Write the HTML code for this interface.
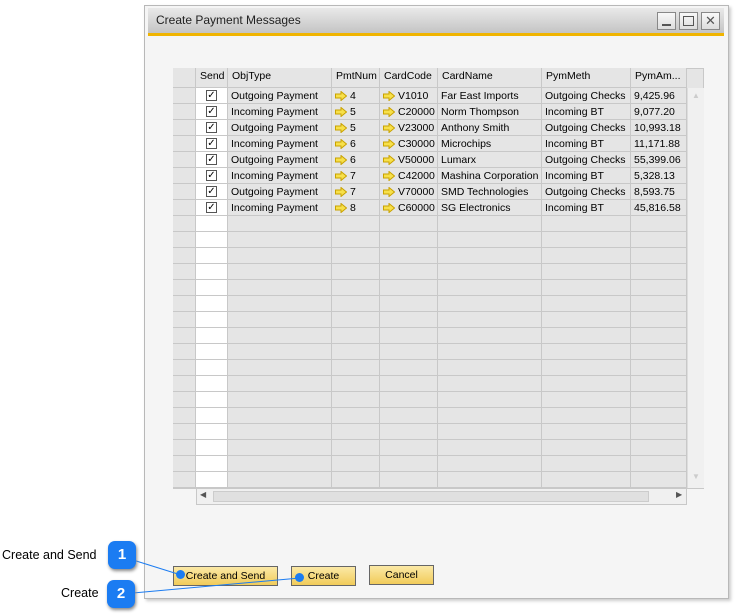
<!DOCTYPE html>
<html><head><meta charset="utf-8"><style>
*{margin:0;padding:0;box-sizing:border-box}
body{width:736px;height:616px;background:#fff;position:relative;overflow:hidden;font-family:"Liberation Sans","DejaVu Sans",sans-serif;font-size:10.5px;color:#000}
.a{position:absolute}
.win{left:144px;top:5px;width:585px;height:594px;border:1px solid #b8b8b8;background:#f5f5f5;box-shadow:2px 2px 3px #ccc}
.title{left:148px;top:8px;width:576px;height:25px;background:linear-gradient(#e9e9e9,#c4c4c4)}
.tbtn{top:12px;width:19px;height:18px;border:1px solid #888;background:linear-gradient(#f8f8f8,#ddd)}
.col{top:68px;height:420px;border-right:1px solid #c8c8c8;background:#e5e5e5}
.hd{top:68px;height:20px;line-height:17px;padding-left:4px;border-bottom:1px solid #c8c8c8;background:#e5e5e5;border-right:1px solid #c8c8c8}
.row{left:196px;width:491px;height:15px}
.c{position:absolute;top:0;height:16px;line-height:16px;padding-left:3px;white-space:nowrap}
.chk{position:absolute;left:10px;top:2px;width:11px;height:11px;border:1px solid #555;background:#fff;font-size:10px;line-height:9px;text-align:center}
.ar{display:inline-block;vertical-align:-2px;margin-right:3px}
.btn{top:566px;height:20px;border:1px solid #666;background:linear-gradient(#fbe9a6,#f1cb5a);text-align:center;line-height:18px;font-size:10.5px}
.badge{width:28px;height:28px;border-radius:7px;background:#1b7cf2;color:#fff;font-weight:bold;font-size:15px;text-align:center;line-height:28px;box-shadow:1px 2px 3px #888}
.dot{width:9px;height:9px;border-radius:50%;background:#1b7cf2}
</style></head><body>
<svg width="0" height="0" style="position:absolute"><defs><symbol id="ar" viewBox="0 0 12 10"><path d="M0.5 3H6V0.5L11.5 5L6 9.5V7H0.5Z" fill="#f7e04a" stroke="#c9a200" stroke-width="1"/></symbol></defs></svg>
<div class="a win"></div>
<div class="a title"></div>
<div class="a" style="left:156px;top:13px;font-size:12px;color:#222">Create Payment Messages</div>
<div class="a" style="left:148px;top:33px;width:576px;height:3px;background:#f0b400"></div>
<div class="a tbtn" style="left:657px"><div class="a" style="left:4px;top:11px;width:9px;height:2px;background:#555"></div></div>
<div class="a tbtn" style="left:679px"><div class="a" style="left:3px;top:3px;width:11px;height:10px;border:1px solid #555"></div></div>
<div class="a tbtn" style="left:701px;text-align:center;line-height:16px;font-size:13px;color:#555">✕</div>

<div class="a" style="left:173px;top:68px;width:531px;height:421px;border:1px solid #c8c8c8;background:#e5e5e5"></div>
<div class="a col" style="left:173px;width:23px"></div>
<div class="a col" style="left:196px;width:32px;background:#fff"></div>
<div class="a col" style="left:228px;width:104px"></div>
<div class="a col" style="left:332px;width:48px"></div>
<div class="a col" style="left:380px;width:58px"></div>
<div class="a col" style="left:438px;width:104px"></div>
<div class="a col" style="left:542px;width:89px"></div>
<div class="a col" style="left:631px;width:56px"></div>
<div class="a" style="left:173px;top:88px;width:514px;height:400px;background:repeating-linear-gradient(to bottom,transparent 0,transparent 15px,#c8c8c8 15px,#c8c8c8 16px)"></div>
<div class="a hd" style="left:173px;width:23px"></div>
<div class="a hd" style="left:196px;width:32px">Send</div>
<div class="a hd" style="left:228px;width:104px">ObjType</div>
<div class="a hd" style="left:332px;width:48px">PmtNum</div>
<div class="a hd" style="left:380px;width:58px">CardCode</div>
<div class="a hd" style="left:438px;width:104px">CardName</div>
<div class="a hd" style="left:542px;width:89px">PymMeth</div>
<div class="a hd" style="left:631px;width:56px">PymAm...</div>
<div class="a" style="left:687px;top:88px;width:17px;height:400px;background:#f0f0f0;border-left:1px solid #ddd"><div style="color:#ccc;font-size:8px;text-align:center;margin-top:3px">▲</div><div style="color:#ccc;font-size:8px;text-align:center;margin-top:372px">▼</div></div>
<div class="a" style="left:196px;top:488px;width:491px;height:17px;border:1px solid #c8c8c8;background:#f0f0f0"><div class="a" style="left:16px;top:2px;width:436px;height:11px;background:#e0e0e0;border:1px solid #ccc"></div><div class="a" style="left:3px;top:1px;font-size:8px;color:#555">◀</div><div class="a" style="left:479px;top:1px;font-size:8px;color:#555">▶</div></div>

<div class="a row" style="top:88px"><span class="chk">✓</span><span class="c" style="left:32px">Outgoing Payment</span><span class="c" style="left:136px"><svg class="ar" width="12" height="10"><use href="#ar"/></svg>4</span><span class="c" style="left:184px"><svg class="ar" width="12" height="10"><use href="#ar"/></svg>V1010</span><span class="c" style="left:242px">Far East Imports</span><span class="c" style="left:346px">Outgoing Checks</span><span class="c" style="left:435px">9,425.96</span></div>
<div class="a row" style="top:104px"><span class="chk">✓</span><span class="c" style="left:32px">Incoming Payment</span><span class="c" style="left:136px"><svg class="ar" width="12" height="10"><use href="#ar"/></svg>5</span><span class="c" style="left:184px"><svg class="ar" width="12" height="10"><use href="#ar"/></svg>C20000</span><span class="c" style="left:242px">Norm Thompson</span><span class="c" style="left:346px">Incoming BT</span><span class="c" style="left:435px">9,077.20</span></div>
<div class="a row" style="top:120px"><span class="chk">✓</span><span class="c" style="left:32px">Outgoing Payment</span><span class="c" style="left:136px"><svg class="ar" width="12" height="10"><use href="#ar"/></svg>5</span><span class="c" style="left:184px"><svg class="ar" width="12" height="10"><use href="#ar"/></svg>V23000</span><span class="c" style="left:242px">Anthony Smith</span><span class="c" style="left:346px">Outgoing Checks</span><span class="c" style="left:435px">10,993.18</span></div>
<div class="a row" style="top:136px"><span class="chk">✓</span><span class="c" style="left:32px">Incoming Payment</span><span class="c" style="left:136px"><svg class="ar" width="12" height="10"><use href="#ar"/></svg>6</span><span class="c" style="left:184px"><svg class="ar" width="12" height="10"><use href="#ar"/></svg>C30000</span><span class="c" style="left:242px">Microchips</span><span class="c" style="left:346px">Incoming BT</span><span class="c" style="left:435px">11,171.88</span></div>
<div class="a row" style="top:152px"><span class="chk">✓</span><span class="c" style="left:32px">Outgoing Payment</span><span class="c" style="left:136px"><svg class="ar" width="12" height="10"><use href="#ar"/></svg>6</span><span class="c" style="left:184px"><svg class="ar" width="12" height="10"><use href="#ar"/></svg>V50000</span><span class="c" style="left:242px">Lumarx</span><span class="c" style="left:346px">Outgoing Checks</span><span class="c" style="left:435px">55,399.06</span></div>
<div class="a row" style="top:168px"><span class="chk">✓</span><span class="c" style="left:32px">Incoming Payment</span><span class="c" style="left:136px"><svg class="ar" width="12" height="10"><use href="#ar"/></svg>7</span><span class="c" style="left:184px"><svg class="ar" width="12" height="10"><use href="#ar"/></svg>C42000</span><span class="c" style="left:242px">Mashina Corporation</span><span class="c" style="left:346px">Incoming BT</span><span class="c" style="left:435px">5,328.13</span></div>
<div class="a row" style="top:184px"><span class="chk">✓</span><span class="c" style="left:32px">Outgoing Payment</span><span class="c" style="left:136px"><svg class="ar" width="12" height="10"><use href="#ar"/></svg>7</span><span class="c" style="left:184px"><svg class="ar" width="12" height="10"><use href="#ar"/></svg>V70000</span><span class="c" style="left:242px">SMD Technologies</span><span class="c" style="left:346px">Outgoing Checks</span><span class="c" style="left:435px">8,593.75</span></div>
<div class="a row" style="top:200px"><span class="chk">✓</span><span class="c" style="left:32px">Incoming Payment</span><span class="c" style="left:136px"><svg class="ar" width="12" height="10"><use href="#ar"/></svg>8</span><span class="c" style="left:184px"><svg class="ar" width="12" height="10"><use href="#ar"/></svg>C60000</span><span class="c" style="left:242px">SG Electronics</span><span class="c" style="left:346px">Incoming BT</span><span class="c" style="left:435px">45,816.58</span></div>

<div class="a btn" style="left:173px;width:105px">Create and Send</div>
<div class="a btn" style="left:291px;width:65px">Create</div>
<div class="a btn" style="left:369px;width:65px;top:565px">Cancel</div>

<svg class="a" style="left:0;top:0" width="736" height="616"><line x1="133" y1="560" x2="181" y2="575" stroke="#1b7cf2" stroke-width="1"/><line x1="133" y1="593" x2="300" y2="578" stroke="#1b7cf2" stroke-width="1"/></svg>
<div class="a dot" style="left:176px;top:570px"></div>
<div class="a dot" style="left:295px;top:573px"></div>
<div class="a badge" style="left:108px;top:541px">1</div>
<div class="a badge" style="left:107px;top:580px">2</div>
<div class="a" style="left:2px;top:548px;font-size:12.5px">Create and Send</div>
<div class="a" style="left:61px;top:586px;font-size:12.5px">Create</div>
</body></html>
